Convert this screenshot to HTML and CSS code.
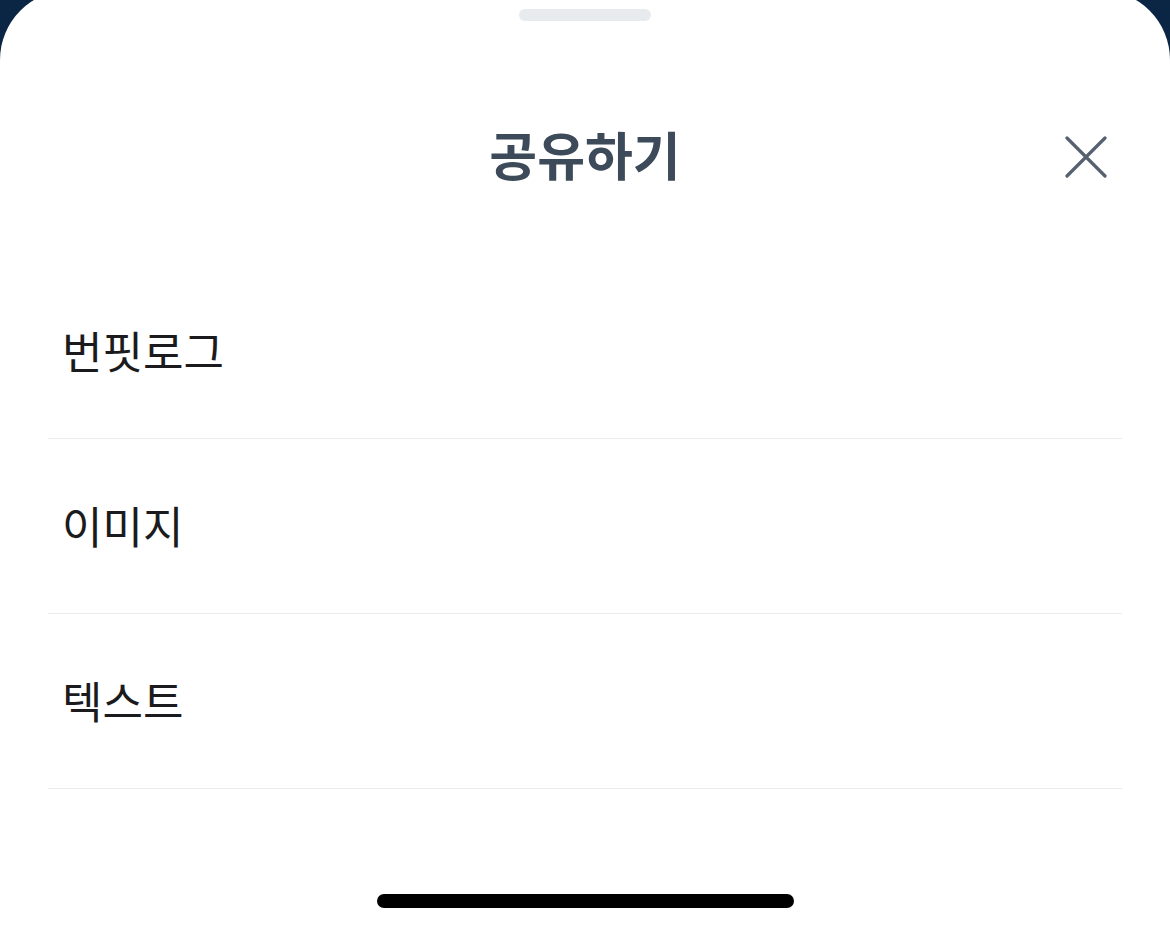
FILE: index.html
```html
<!DOCTYPE html>
<html lang="ko">
<head>
    <meta charset="UTF-8">
    <title>공유하기</title>
    <link rel="stylesheet" href="styles.css">
</head>
<body>
<div class="share_sheet">
    <div class="grabber"></div>
    <div class="sheet_header">
        <div class="header_side"></div>
        <div class="sheet_title">공유하기</div>
        <div class="header_side">
            <div class="btn_close">
                <svg width="42" height="42" viewBox="0 0 42 42">
                    <path d="M2 2 L40 40 M40 2 L2 40" stroke="#56606e" stroke-width="3.2" stroke-linecap="round" fill="none"/>
                </svg>
            </div>
        </div>
    </div>
    <div class="share_list">
        <div class="share_item">번핏로그</div>
        <div class="share_item">이미지</div>
        <div class="share_item">텍스트</div>
    </div>
    <div class="home_area">
        <div class="home_indicator"></div>
    </div>
</div>
</body>
</html>
```

FILE: styles.css
```css
html, body{
    margin: 0;
    padding: 0;
    height: 100%;
    overflow: hidden;
}
body{
    background-color: #0b2545;
    font-family: "Noto Sans CJK KR", "Noto Sans", sans-serif;
}
.share_sheet{
    box-sizing: border-box;
    margin-top: -10px;
    height: 943px;
    padding-top: 19px;
    background-color: white;
    border-radius: 70px 70px 0 0;
    display: flex;
    flex-direction: column;
}
.grabber{
    align-self: center;
    width: 132px;
    height: 12px;
    border-radius: 6px;
    background-color: #e8ebed;
}
.sheet_header{
    box-sizing: border-box;
    height: 243px;
    padding: 103px 0 80px 0;
    display: grid;
    grid-template-columns: 1fr auto 1fr;
    align-items: center;
}
.sheet_title{
    height: 60px;
    line-height: 60px;
    font-size: 52px;
    font-weight: bold;
    color: #3d4a59;
}
.header_side{
    display: flex;
    justify-content: flex-end;
    padding-right: 63px;
}
.btn_close{
    width: 42px;
    height: 42px;
    margin-top: 6px;
    cursor: pointer;
}
.btn_close>svg{
    display: block;
}
.share_list{
    padding: 0 48px;
}
.share_list>.share_item{
    box-sizing: border-box;
    height: 175px;
    padding-left: 14px;
    padding-bottom: 3px;
    display: flex;
    align-items: center;
    font-size: 44px;
    color: #1b1b1d;
    border-bottom: 1px solid #ebebeb;
    cursor: pointer;
}
.home_area{
    display: flex;
    justify-content: center;
    padding-top: 105px;
}
.home_indicator{
    width: 417px;
    height: 14px;
    border-radius: 7px;
    background-color: black;
}
```
